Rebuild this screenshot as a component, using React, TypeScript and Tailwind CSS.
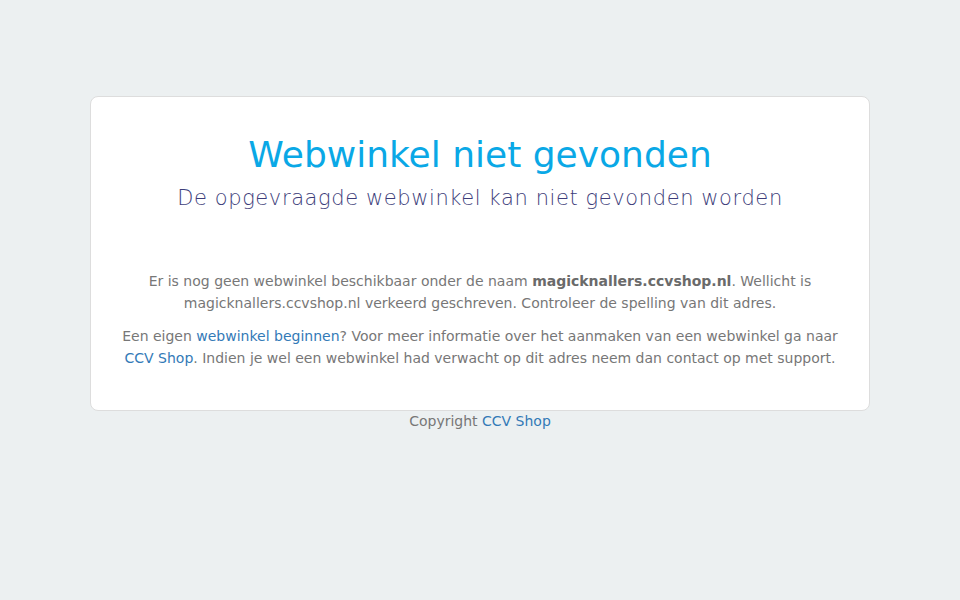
export default function App() {
  return (
    <div className="min-h-screen bg-[#ecf0f1] pt-[96px] font-['DejaVu_Sans',sans-serif] text-[14px] text-[#777]">
      <div className="mx-auto w-[780px] rounded-[8px] border border-[#ddd] bg-white px-[30px] pt-[38px] pb-[30px] text-center">
        <h1 className="text-[36px] leading-[40px] text-[#0aa8e6]">Webwinkel niet gevonden</h1>
        <h2 className="mt-[9px] text-[21px] leading-[28px] font-extralight tracking-[0.6px] text-[#3d3d7a]">
          De opgevraagde webwinkel kan niet gevonden worden
        </h2>
        <div className="mt-[58px] leading-[22px]">
          <p className="mb-[11px]">
            Er is nog geen webwinkel beschikbaar onder de naam{" "}
            <b className="text-[#6a6a6a]">magicknallers.ccvshop.nl</b>. Wellicht is
            magicknallers.ccvshop.nl verkeerd geschreven. Controleer de spelling van dit adres.
          </p>
          <p className="mb-[11px]">
            Een eigen <a className="text-[#337ab7]">webwinkel beginnen</a>? Voor meer informatie over
            het aanmaken van een webwinkel ga naar <a className="text-[#337ab7]">CCV Shop</a>. Indien
            je wel een webwinkel had verwacht op dit adres neem dan contact op met support.
          </p>
        </div>
      </div>
      <p className="text-center leading-[20px]">
        Copyright <a className="text-[#337ab7]">CCV Shop</a>
      </p>
    </div>
  );
}
